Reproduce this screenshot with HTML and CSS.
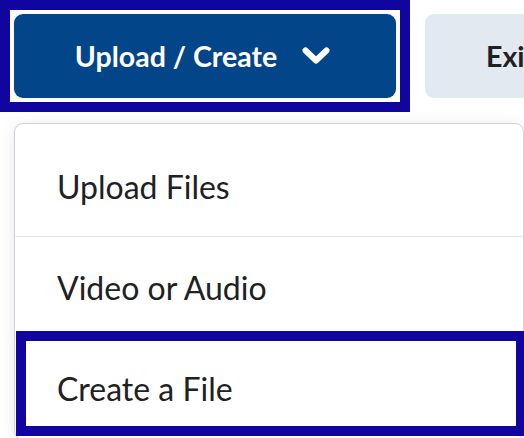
FILE: index.html
```html
<!DOCTYPE html>
<html lang="en">
<head>
<meta charset="utf-8">
<title>Upload / Create</title>
<link rel="stylesheet" href="styles.css">
</head>
<body>
  <div class="toolbar">
    <div class="focus-frame">
      <button class="btn-primary" type="button">
        <span>Upload / Create</span>
        <svg class="chevron" viewBox="0 0 28 18" width="28" height="18" aria-hidden="true">
          <polyline points="3.5,3.5 14,13.5 24.5,3.5" fill="none" stroke="#ffffff" stroke-width="6" stroke-linecap="round" stroke-linejoin="round"/>
        </svg>
      </button>
    </div>
    <button class="btn-secondary" type="button">Exit</button>
  </div>
  <div class="menu">
    <div class="menu-item">Upload Files</div>
    <div class="menu-item">Video or Audio</div>
    <div class="menu-item menu-item-marked">
      Create a File
      <span class="mark" aria-hidden="true"></span>
    </div>
  </div>
</body>
</html>
```
FILE: styles.css
```css
html, body {
  margin: 0;
  padding: 0;
  overflow: hidden;
  background: #ffffff;
}
body {
  width: 524px;
  height: 438px;
  font-family: Lato, "Noto Sans", sans-serif;
  color: #202122;
}
.toolbar {
  display: flex;
  align-items: center;
  gap: 15px;
  width: 640px;
}
.focus-frame {
  border: 10px solid #10069f;
  padding: 4px;
  flex: none;
}
.btn-primary {
  display: flex;
  align-items: center;
  justify-content: center;
  gap: 25px;
  width: 382px;
  height: 84px;
  margin: 0;
  padding: 0 5px 0 0;
  border: none;
  border-radius: 9px;
  background: #024589;
  color: #ffffff;
  font-family: Lato, "Noto Sans", sans-serif;
  font-weight: 700;
  font-size: 28.5px;
}
.chevron {
  display: block;
  flex: none;
}
.btn-secondary {
  flex: none;
  width: 200px;
  height: 84px;
  margin: 0;
  padding: 0 0 0 61px;
  text-align: left;
  border: none;
  border-radius: 9px;
  background: #e3e9f1;
  color: #202122;
  font-family: Lato, "Noto Sans", sans-serif;
  font-weight: 700;
  font-size: 28.5px;
}
.menu {
  margin: 11px 0 0 14px;
  width: 508px;
  padding-top: 12px;
  border: 1px solid #cdd5dc;
  border-radius: 9px;
  background: #ffffff;
  box-shadow: 0 2px 14px rgba(0, 0, 0, 0.10);
}
.menu-item {
  position: relative;
  display: flex;
  align-items: center;
  height: 100px;
  padding-left: 42px;
  font-size: 32px;
  border-bottom: 1px solid #e3e9f1;
}
.mark {
  position: absolute;
  top: -7px;
  left: 1px;
  right: -3px;
  bottom: 2px;
  border: 10px solid #10069f;
}
```
